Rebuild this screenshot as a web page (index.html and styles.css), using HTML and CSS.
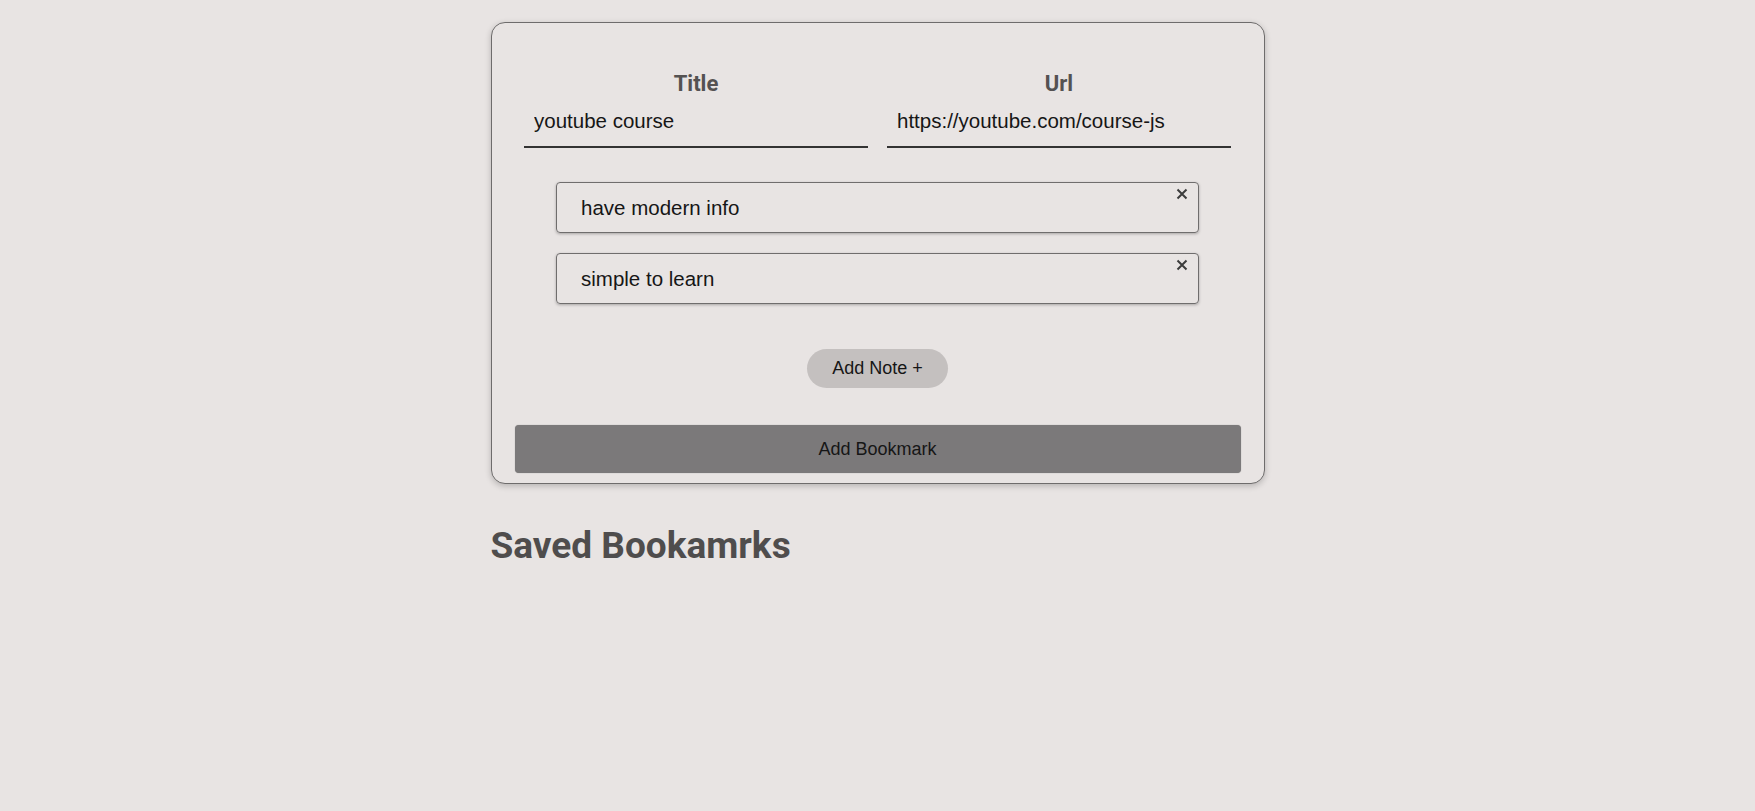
FILE: index.html
```html
<!DOCTYPE html>
<html lang="en">
<head>
<meta charset="utf-8">
<title>Bookmarks</title>
<link rel="stylesheet" href="styles.css">
</head>
<body>
<main class="page">
  <form class="card">
    <div class="fields">
      <label class="field">
        <span class="field-label">Title</span>
        <input class="field-input" type="text" value="youtube course">
      </label>
      <label class="field">
        <span class="field-label">Url</span>
        <input class="field-input" type="text" value="https://youtube.com/course-js">
      </label>
    </div>
    <div class="notes">
      <div class="note">
        <span class="note-text">have modern info</span>
        <button class="note-remove" type="button" aria-label="remove"><svg class="x-icon" viewBox="0 0 12 12"><path d="M1.5 1.5L10.5 10.5M10.5 1.5L1.5 10.5"/></svg></button>
      </div>
      <div class="note">
        <span class="note-text">simple to learn</span>
        <button class="note-remove" type="button" aria-label="remove"><svg class="x-icon" viewBox="0 0 12 12"><path d="M1.5 1.5L10.5 10.5M10.5 1.5L1.5 10.5"/></svg></button>
      </div>
    </div>
    <button class="add-note" type="button">Add Note +</button>
    <button class="add-bookmark" type="button">Add Bookmark</button>
  </form>
  <h2 class="saved-title">Saved Bookamrks</h2>
</main>
</body>
</html>
```
FILE: styles.css
```css
* { box-sizing: border-box; }
html, body { margin: 0; padding: 0; }
body {
  background: #e8e4e3;
  font-family: "Liberation Sans", Arial, sans-serif;
  color: #111;
}
.page {
  width: 774px;
  margin: 0 auto;
  padding-top: 22px;
  display: flex;
  flex-direction: column;
}
.card {
  width: 774px;
  border: 1px solid #6e6c6c;
  border-radius: 14px;
  box-shadow: 0 2px 6px rgba(0,0,0,0.22);
  padding: 0 23px 10px;
  display: flex;
  flex-direction: column;
  align-items: center;
  background: #e8e4e3;
}
.fields {
  margin-top: 48px;
  display: flex;
  gap: 19px;
  justify-content: center;
  width: 100%;
}
.field {
  width: 344px;
  display: flex;
  flex-direction: column;
}
.field-label {
  font-family: Roboto, "Liberation Sans", sans-serif;
  font-weight: 700;
  font-size: 22px;
  line-height: 26px;
  text-align: center;
  color: #545252;
}
.field-input {
  height: 51px;
  border: none;
  border-bottom: 2px solid #333;
  background: transparent;
  font-family: "Liberation Sans", Arial, sans-serif;
  font-size: 20.5px;
  color: #161616;
  padding: 0 10px 1px;
  outline: none;
}
.notes {
  margin-top: 34px;
  width: 643px;
  display: flex;
  flex-direction: column;
  gap: 20px;
}
.note {
  position: relative;
  height: 51px;
  border: 1px solid #6f6d6d;
  border-radius: 4px;
  box-shadow: 0 1px 3px rgba(0,0,0,0.28);
  display: flex;
  align-items: center;
  padding-left: 24px;
  font-size: 20.5px;
  color: #161616;
}
.note-remove {
  position: absolute;
  top: 4px;
  right: 9px;
  border: none;
  background: transparent;
  padding: 0;
  width: 14px;
  height: 14px;
  display: flex;
  align-items: center;
  justify-content: center;
}
.x-icon {
  width: 12px;
  height: 12px;
  stroke: #3c3c3c;
  stroke-width: 2;
  fill: none;
}
.add-note {
  margin-top: 45px;
  width: 141px;
  height: 39px;
  border: none;
  border-radius: 20px;
  background: #c4c0bf;
  font-family: "Liberation Sans", Arial, sans-serif;
  font-size: 18px;
  color: #161616;
}
.add-bookmark {
  margin-top: 37px;
  width: 100%;
  height: 48px;
  border: none;
  border-radius: 4px;
  background: #7b797a;
  box-shadow: 0 0 1px rgba(0,0,0,0.4);
  font-family: "Liberation Sans", Arial, sans-serif;
  font-size: 18px;
  color: #161616;
}
.saved-title {
  margin: 40px 0 0;
  font-family: Roboto, "Liberation Sans", sans-serif;
  font-weight: 700;
  font-size: 37px;
  line-height: 44px;
  color: #4f4d4d;
}
```
